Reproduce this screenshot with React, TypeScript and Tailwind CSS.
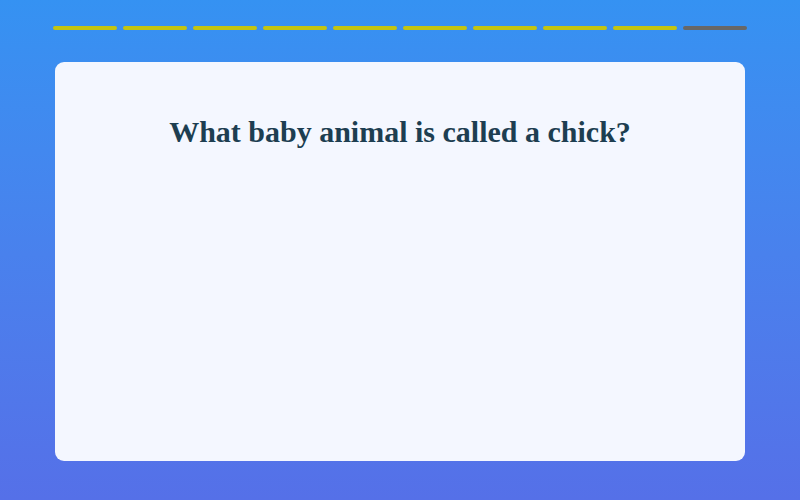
export default function App() {
  const steps = Array.from({ length: 10 }, (_, i) => i)

  return (
    <div className="flex h-[500px] w-[800px] flex-col bg-gradient-to-b from-[#3592f2] to-[#5570e8] px-[55px] pt-[26px]">
      <div className="-mx-[2px] flex gap-[6px]">
        {steps.map((i) => (
          <div
            key={i}
            className={
              i < 9
                ? "h-[4px] flex-1 rounded-full bg-[#c3c410]"
                : "h-[4px] flex-1 rounded-full bg-[#676767]"
            }
          />
        ))}
      </div>
      <div className="mt-[32px] h-[399px] rounded-[9px] bg-[#f4f7ff] pt-[48px]">
        <h1
          className="text-center text-[30px] leading-[44px] font-bold text-[#1d3e51]"
          style={{ fontFamily: '"Liberation Serif", serif' }}
        >
          What baby animal is called a chick?
        </h1>
      </div>
    </div>
  )
}
